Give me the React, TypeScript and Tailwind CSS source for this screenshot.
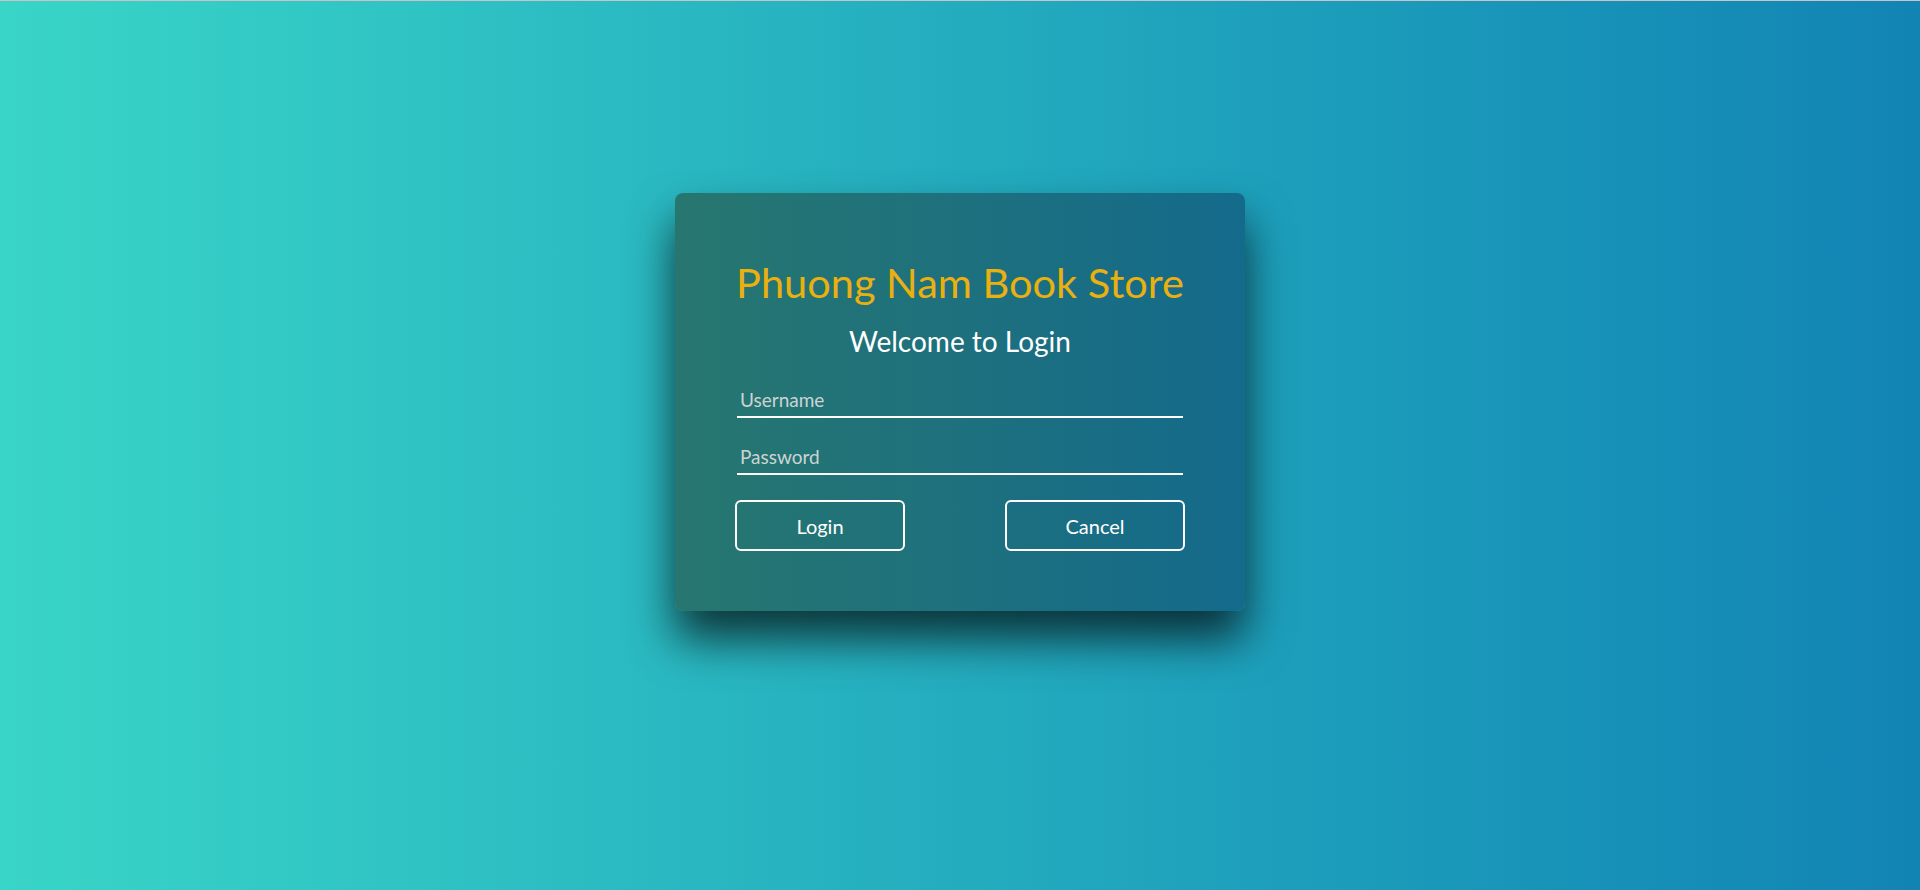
import React, { useState } from 'react';

const App: React.FC = () => {
  const [username, setUsername] = useState('');
  const [password, setPassword] = useState('');

  const handleCancel = () => {
    setUsername('');
    setPassword('');
  };

  return (
    <div className="min-h-screen w-full bg-gradient-to-r from-[#39d5c7] to-[#1284b4] font-['Lato',_'Noto_Sans',_sans-serif]">
      <div className="h-px w-full bg-[#c9c4ca]" />
      <div className="flex justify-center pt-[192px]">
        <div className="w-[570px] rounded-[8px] bg-gradient-to-r from-[#27766f] to-[#146a8b] px-[60px] pt-[65px] pb-[60px] shadow-[0_28px_45px_rgba(0,0,0,0.7)]">
          <h1 className="text-center text-[41.5px] leading-[48px] font-normal text-[#e9b010]">
            Phuong Nam Book Store
          </h1>
          <h2 className="mt-[17px] text-center text-[28px] leading-[36px] font-normal text-white">
            Welcome to Login
          </h2>

          <form
            className="mt-[28px]"
            onSubmit={(e) => e.preventDefault()}
          >
            <div className="mx-[2px]">
              <input
                type="text"
                value={username}
                onChange={(e) => setUsername(e.target.value)}
                placeholder="Username"
                className="block h-[31px] w-full border-b-2 border-white bg-transparent pb-[5px] pl-[3px] text-[19px] leading-[24px] text-white outline-none placeholder:text-[#ccd3d3]"
              />
            </div>
            <div className="mx-[2px] mt-[26px]">
              <input
                type="password"
                value={password}
                onChange={(e) => setPassword(e.target.value)}
                placeholder="Password"
                className="block h-[31px] w-full border-b-2 border-white bg-transparent pb-[5px] pl-[3px] text-[19px] leading-[24px] text-white outline-none placeholder:text-[#ccd3d3]"
              />
            </div>

            <div className="mt-[25px] flex justify-between">
              <button
                type="submit"
                className="h-[51px] w-[170px] rounded-[6px] border-2 border-white bg-transparent text-[20px] text-white"
              >
                Login
              </button>
              <button
                type="button"
                onClick={handleCancel}
                className="h-[51px] w-[180px] rounded-[6px] border-2 border-white bg-transparent text-[20px] text-white"
              >
                Cancel
              </button>
            </div>
          </form>
        </div>
      </div>
    </div>
  );
};

export default App;
